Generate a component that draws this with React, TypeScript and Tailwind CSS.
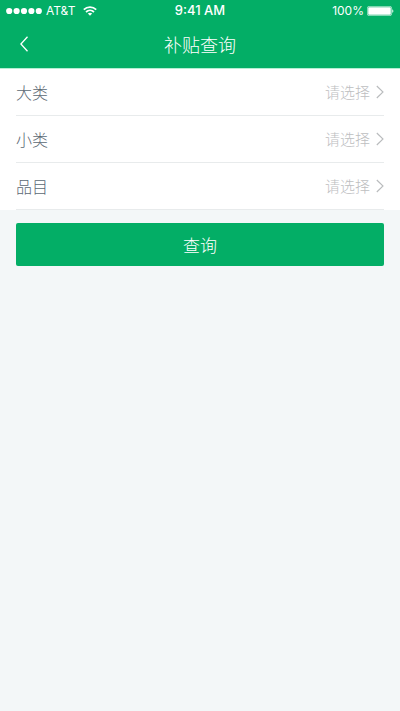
import { useState } from 'react'
import type { FormEvent } from 'react'

// ── Data ───────────────────────────────────────────────────────────────────────

const FIELDS = [
  { id: 'category',    label: '大类' },
  { id: 'subcategory', label: '小类' },
  { id: 'item',        label: '品目' },
]

// ── Icons ──────────────────────────────────────────────────────────────────────

function SignalDots() {
  return (
    <svg width="36" height="8" viewBox="0 0 36 8" fill="currentColor" aria-hidden="true">
      {[3.2, 10.6, 18, 25.4, 32.8].map(cx => <circle key={cx} cx={cx} cy="4" r="3.1" />)}
    </svg>
  )
}

function WifiIcon() {
  return (
    <svg width="14" height="10" viewBox="0 0 14 10" fill="none" stroke="currentColor" strokeWidth="1.7" aria-hidden="true">
      <path d="M0.8 3.7C4.3 0.3 9.7 0.3 13.2 3.7" />
      <path d="M3 6C5.3 3.9 8.7 3.9 11 6" />
      <path d="M7 9.8L4.8 7.6C6.1 6.5 7.9 6.5 9.2 7.6Z" fill="currentColor" stroke="none" />
    </svg>
  )
}

function BatteryIcon() {
  return (
    <svg width="27" height="10" viewBox="0 0 27 10" aria-hidden="true">
      <rect x="0.4" y="0.4" width="24.2" height="9.2" rx="1.6" fill="none" stroke="currentColor" strokeWidth="0.8" opacity="0.7" />
      <rect x="1.2" y="1.2" width="22.6" height="7.6" rx="0.8" fill="currentColor" />
      <path d="M25.3 3.2C26.7 3.6 26.7 6.4 25.3 6.8Z" fill="currentColor" />
    </svg>
  )
}

function BackIcon() {
  return (
    <svg width="8" height="16" viewBox="0 0 8 16" fill="none" stroke="currentColor" strokeWidth="1.3" aria-hidden="true">
      <path d="M7.5 0.7L0.9 8L7.5 15.3" />
    </svg>
  )
}

function ChevronIcon() {
  return (
    <svg width="8" height="14" viewBox="0 0 8 14" fill="none" stroke="currentColor" strokeWidth="1.1" aria-hidden="true">
      <path d="M0.8 1L7 7L0.8 13" />
    </svg>
  )
}

// ── Sections ───────────────────────────────────────────────────────────────────

function StatusBar() {
  return (
    <div className="grid grid-cols-3 items-center h-[22px] px-1.5 font-['Inter','Liberation_Sans',sans-serif] text-xs font-normal">
      <div className="flex items-center gap-1">
        <SignalDots />
        <span>AT&amp;T</span>
        <span className="ml-1"><WifiIcon /></span>
      </div>
      <span className="text-center text-[13px] font-medium">9:41 AM</span>
      <div className="flex items-center justify-end gap-[3px]">
        <span>100%</span>
        <BatteryIcon />
      </div>
    </div>
  )
}

function SelectRow({ id, label }: { id: string; label: string }) {
  const [value, setValue] = useState('')

  return (
    <div className="flex items-center h-[47px] border-b border-[#e8ebec]">
      <label htmlFor={id} className="flex-1 text-base text-[#5b6873]">{label}</label>
      <select
        id={id}
        value={value}
        onChange={e => setValue(e.target.value)}
        className="appearance-none bg-transparent text-[15px] text-[#bdbebf] outline-none"
      >
        <option value="">请选择</option>
      </select>
      <span className="ml-[5px] text-[#b9bbbd]"><ChevronIcon /></span>
    </div>
  )
}

export default function App() {
  function handleSubmit(e: FormEvent) {
    e.preventDefault()
  }

  return (
    <div className="min-h-screen bg-[#f3f7f8] font-['Noto_Sans_CJK_SC',sans-serif] font-light">
      <header className="bg-[#03ae66] text-white">
        <StatusBar />
        <div className="grid grid-cols-[1fr_auto_1fr] items-center h-[46px] px-5 pb-0.5">
          <button type="button" aria-label="返回" className="justify-self-start cursor-pointer">
            <BackIcon />
          </button>
          <h1 className="text-lg font-light">补贴查询</h1>
        </div>
      </header>

      <form onSubmit={handleSubmit}>
        <div className="bg-white border-t border-[#b4efd3] px-4">
          {FIELDS.map(f => <SelectRow key={f.id} id={f.id} label={f.label} />)}
        </div>
        <div className="px-4 pt-[13px]">
          <button type="submit" className="w-full h-[43px] rounded-xs bg-[#03ae66] text-[17px] text-white cursor-pointer">
            查询
          </button>
        </div>
      </form>
    </div>
  )
}
